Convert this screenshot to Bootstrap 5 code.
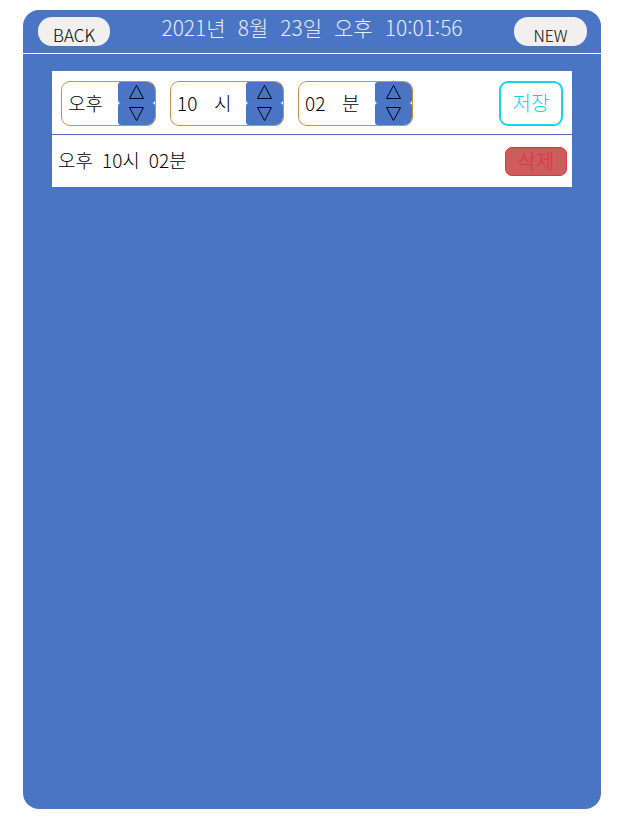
<!DOCTYPE html>
<html lang="ko">
<head>
<meta charset="utf-8">
<meta name="viewport" content="width=device-width, initial-scale=1">
<title>Alarm</title>
<link href="https://cdn.jsdelivr.net/npm/bootstrap@5.3.0/dist/css/bootstrap.min.css" rel="stylesheet">
<style>
  :root { --panel-blue: #4a74c4; }
  body { font-family: "Noto Sans CJK KR", sans-serif; font-weight: 300; font-size: 19px; line-height: 24px; color: #000; background: #fff; }
  button, input { font-weight: 300; }
  .alarm-panel { margin: 10px 32px 23px 23px; min-height: calc(100vh - 33px); border-radius: 16px; background: var(--panel-blue); }
  .alarm-header { height: 44px; padding: 7px 14px 0 15px; border-bottom: 1px solid #fff; }
  .clock { font-size: 21px; line-height: 20px; color: #e8eefb; gap: 12px; }
  .nav-pill { height: 29px; padding: 6px 0 0; border: 0; border-radius: 14px; background: #f1f0ef; line-height: 20px; color: #000; font-size: 17px; }
  .back-pill { width: 72px; }
  .new-pill { width: 73px; font-size: 16px; }
  .alarm-list { margin: 17px 29px 0; background: #fff; }
  .alarm-form { height: 64px; padding: 1px 9px 0; gap: 14px; border-bottom: 1px solid var(--panel-blue); }
  .time-box { height: 45px; padding-left: 6px; border: 1px solid #d58b45; border-radius: 9px; overflow: hidden; }
  .period-box { width: 95px; }
  .hour-box { width: 114px; }
  .minute-box { width: 115px; }
  .time-value { width: 37px; padding: 0; border: 0; background: transparent; line-height: 24px; color: #000; }
  .stepper { width: 37px; }
  .step-btn { padding: 0; border: 0; border-radius: 3px; background: var(--panel-blue); line-height: 0; }
  .save-btn { width: 64px; height: 45px; padding: 0; border: 2px solid #13d5ed; border-radius: 9px; background: #fff; color: #13cfe8; font-size: 20px; }
  .alarm-item { height: 52px; padding: 0 5px 0 6px; }
  .item-text { gap: 9px; line-height: 22px; padding-bottom: 2px; }
  .delete-btn { width: 62px; height: 29px; padding: 0; border: 1px solid #dc3545; border-radius: 7px; background: #cd5c5c; color: #dc3545; font-size: 20px; line-height: 24px; }
</style>
<script src="https://cdn.jsdelivr.net/npm/bootstrap@5.3.0/dist/js/bootstrap.bundle.min.js"></script>
</head>
<body>
<main class="alarm-panel">
  <header class="alarm-header d-flex justify-content-between align-items-start">
    <button type="button" class="nav-pill back-pill">BACK</button>
    <div class="clock d-flex"><span>2021년</span> <span>8월</span> <span>23일</span> <span>오후</span> <span>10:01:56</span></div>
    <button type="button" class="nav-pill new-pill">NEW</button>
  </header>
  <section class="alarm-list">
    <form class="alarm-form d-flex align-items-center">
      <div class="time-box period-box d-flex align-items-center">
        <input class="time-value flex-grow-1" type="text" value="오후" aria-label="오전/오후">
        <div class="stepper d-flex flex-column align-self-stretch flex-shrink-0">
          <button type="button" class="step-btn flex-fill" aria-label="오전/오후 위로"><svg width="17" height="16" viewBox="0 0 17 16" fill="none" stroke="#000" stroke-width="1"><path d="M8.500 1.500 15.500 14.500H1.500Z"/></svg></button>
          <button type="button" class="step-btn flex-fill" aria-label="오전/오후 아래로"><svg width="17" height="16" viewBox="0 0 17 16" fill="none" stroke="#000" stroke-width="1"><path d="M8.500 14.500 15.500 1.500H1.500Z"/></svg></button>
        </div>
      </div>
      <div class="time-box hour-box d-flex align-items-center">
        <input class="time-value" id="hour" type="text" value="10">
        <label class="flex-grow-1" for="hour">시</label>
        <div class="stepper d-flex flex-column align-self-stretch flex-shrink-0">
          <button type="button" class="step-btn flex-fill" aria-label="시 위로"><svg width="17" height="16" viewBox="0 0 17 16" fill="none" stroke="#000" stroke-width="1"><path d="M8.500 1.500 15.500 14.500H1.500Z"/></svg></button>
          <button type="button" class="step-btn flex-fill" aria-label="시 아래로"><svg width="17" height="16" viewBox="0 0 17 16" fill="none" stroke="#000" stroke-width="1"><path d="M8.500 14.500 15.500 1.500H1.500Z"/></svg></button>
        </div>
      </div>
      <div class="time-box minute-box d-flex align-items-center">
        <input class="time-value" id="minute" type="text" value="02">
        <label class="flex-grow-1" for="minute">분</label>
        <div class="stepper d-flex flex-column align-self-stretch flex-shrink-0">
          <button type="button" class="step-btn flex-fill" aria-label="분 위로"><svg width="17" height="16" viewBox="0 0 17 16" fill="none" stroke="#000" stroke-width="1"><path d="M8.500 1.500 15.500 14.500H1.500Z"/></svg></button>
          <button type="button" class="step-btn flex-fill" aria-label="분 아래로"><svg width="17" height="16" viewBox="0 0 17 16" fill="none" stroke="#000" stroke-width="1"><path d="M8.500 14.500 15.500 1.500H1.500Z"/></svg></button>
        </div>
      </div>
      <button type="button" class="save-btn ms-auto">저장</button>
    </form>
    <div class="alarm-item d-flex align-items-center justify-content-between">
      <div class="item-text d-flex"><span>오후</span> <span>10시</span> <span>02분</span></div>
      <button type="button" class="delete-btn">삭제</button>
    </div>
  </section>
</main>
</body>
</html>
